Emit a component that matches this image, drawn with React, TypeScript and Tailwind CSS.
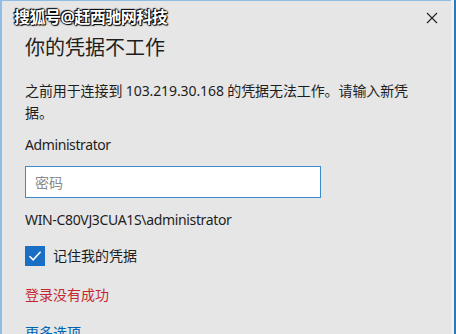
const cjk = "font-['Segoe_UI','Noto_Sans','Noto_Sans_CJK_SC',sans-serif]";

function CloseIcon() {
  return (
    <svg width="12" height="12" viewBox="0 0 12 12" className="block">
      <path d="M1 1 L11 11 M11 1 L1 11" stroke="#222" strokeWidth="1.1" fill="none" />
    </svg>
  );
}

function CheckBox() {
  return (
    <div className="w-5 h-5 bg-[#1a6fc4] flex items-center justify-center">
      <svg width="16" height="16" viewBox="0 0 16 16">
        <path d="M2.5 8.2 L6.2 11.8 L13.6 3.8" stroke="#fff" strokeWidth="1.6" fill="none" />
      </svg>
    </div>
  );
}

export default function App() {
  return (
    <div className={`w-[456px] h-[334px] overflow-hidden flex ${cjk} text-[#1e1e1e]`}>
      <div className="relative flex-1 h-full bg-[#e6e6e6] border-l-2 border-t border-[#8fbde3] pl-[23px] pt-[33px]">
        <div className="absolute left-[12px] top-[6px] text-[16px] leading-[20px] font-bold text-white tracking-[-0.5px] [text-shadow:0_0_1px_#000,0_0_1px_#000,0_0_2px_#000,1px_1px_1px_#000,-1px_-1px_1px_#000]">
          搜狐号@赶西驰网科技
        </div>
        <button className="absolute right-[13px] top-[11px] p-0">
          <CloseIcon />
        </button>

        <h1 className="text-[20px] leading-[28px] font-normal">你的凭据不工作</h1>

        <p className="mt-[18px] w-[392px] text-[14px] leading-[22px] tracking-[-0.1px]">
          之前用于连接到 103.219.30.168 的凭据无法工作。请输入新凭据。
        </p>

        <div className="mt-[10px] text-[14px] leading-[22px] tracking-[-0.4px]">Administrator</div>

        <div className="mt-[10px] w-[296px] h-[32px] bg-white border border-[#3f8bc9] flex items-center px-[9px]">
          <span className="text-[14px] text-[#8a8a8a]">密码</span>
        </div>

        <div className="mt-[11px] text-[14px] leading-[22px] tracking-[-0.35px]">WIN-C80VJ3CUA1S\administrator</div>

        <div className="mt-[15px] flex items-center gap-[8px]">
          <CheckBox />
          <span className="text-[14px] leading-[20px]">记住我的凭据</span>
        </div>

        <div className="mt-[18px] text-[14px] leading-[22px] text-[#c4262e]">登录没有成功</div>

        <div className="mt-[16px] text-[14px] leading-[22px] text-[#0063b1]">更多选项</div>
      </div>
      <div className="w-[3px] h-full bg-[#eef0f0]" />
      <div className="w-[2px] h-full bg-[#2b7bb8]" />
    </div>
  );
}
